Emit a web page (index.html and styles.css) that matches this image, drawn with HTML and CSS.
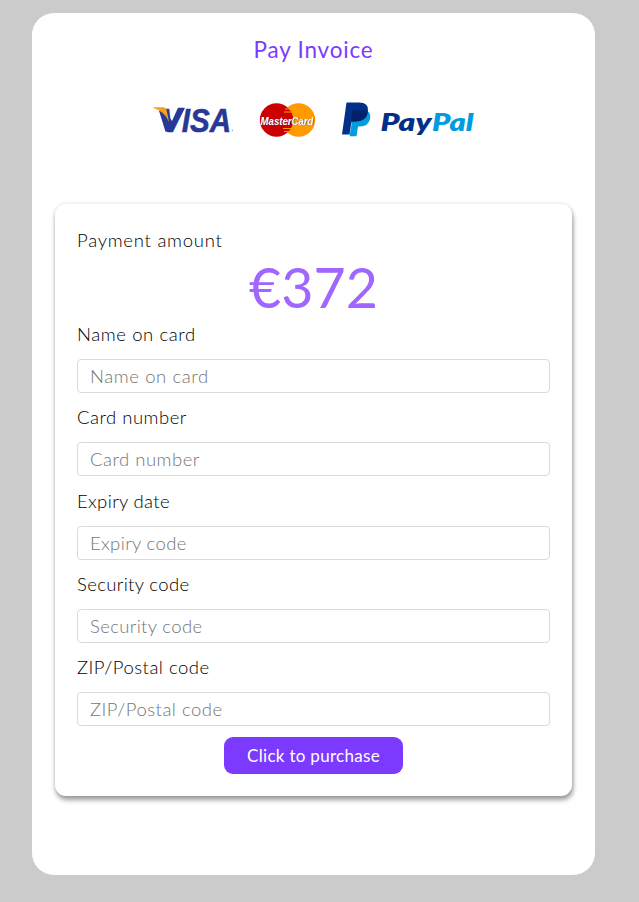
FILE: index.html
```html
<!DOCTYPE html>
<html lang="en">
<head>
<meta charset="utf-8">
<title>Pay Invoice</title>
<link rel="stylesheet" href="styles.css">
</head>
<body>
<main class="panel">
  <h1 class="title">Pay Invoice</h1>
  <div class="brands">
    <svg class="brand" width="82" height="40" viewBox="153 100 82 40" role="img" aria-label="Visa">
      <text class="visa" x="163" y="131.700" textLength="69" lengthAdjust="spacingAndGlyphs">VISA</text>
      <path fill="#fff" d="M153 104h20v3h-6l-2 8-5 3z"/>
      <path fill="#283897" d="M165 110l8 11 6-13.300h7L173 131.700h-6.500l-6.500-21z"/>
      <path fill="#f9a01b" d="M154.500 107.300H164q3 0 3.700 3.200l2.300 11.500q-4-10.500-15.500-14z"/>
      <circle cx="233.300" cy="130.500" r=".7" fill="#8b94c6"/>
    </svg>
    <svg class="brand" width="57" height="40" viewBox="259 100 57 40" role="img" aria-label="MasterCard">
      <circle cx="298.500" cy="120" r="16.700" fill="#ff9a00"/>
      <circle cx="276.500" cy="120" r="16.700" fill="#c00"/>
      <path stroke="#ff9a00" stroke-width="1.200" d="M285 109h5M284 112h8M283 128.500h9.500M284 131.500h7"/>
      <text class="mastercard mastercard-shadow" x="261" y="125.200" textLength="53" lengthAdjust="spacingAndGlyphs">MasterCard</text>
      <text class="mastercard" x="260.500" y="124.500" textLength="53" lengthAdjust="spacingAndGlyphs">MasterCard</text>
    </svg>
    <svg class="brand" width="134" height="40" viewBox="340 100 134 40" role="img" aria-label="PayPal">
      <path fill="#009cde" d="M363.500 109.500q7 2 5.500 9.500-1.800 7.500-10 7.500h-2l-1.500 9.800h-7l3-18z"/>
      <path fill="#003087" d="M345.500 102.500H358q10 0 9 8.500-1.500 10.500-12.500 10.500h-4l-2 13h-7.500z"/>
      <path fill="#012169" d="M351.500 110.500h12.500q2 .8 2.800 2.200-2 8.800-12.300 8.800h-4l-1 5z"/>
      <text class="paypal" y="131"><tspan class="paypal-dark" x="379.500" textLength="51" lengthAdjust="spacingAndGlyphs">Pay</tspan><tspan class="paypal-light" x="431" textLength="41.500" lengthAdjust="spacingAndGlyphs">Pal</tspan></text>
    </svg>
  </div>
  <form class="card">
    <div class="label amount-label">Payment amount</div>
    <div class="amount">€372</div>
    <div class="field">
      <label class="label name" for="name">Name on card</label>
      <input class="input name" id="name" type="text" placeholder="Name on card">
    </div>
    <div class="field">
      <label class="label number" for="number">Card number</label>
      <input class="input number" id="number" type="text" placeholder="Card number">
    </div>
    <div class="field">
      <label class="label expiry" for="expiry">Expiry date</label>
      <input class="input expiry" id="expiry" type="text" placeholder="Expiry code">
    </div>
    <div class="field">
      <label class="label security" for="security">Security code</label>
      <input class="input security" id="security" type="text" placeholder="Security code">
    </div>
    <div class="field">
      <label class="label postal" for="postal">ZIP/Postal code</label>
      <input class="input postal" id="postal" type="text" placeholder="ZIP/Postal code">
    </div>
    <button class="purchase" type="button">Click to purchase</button>
  </form>
</main>
</body>
</html>
```
FILE: styles.css
```css
* { box-sizing: border-box; }

body {
  margin: 0;
  height: 902px;
  padding: 13px 44px 27px 32px;
  background: #cbcbcb;
  font-family: Lato, "Open Sans", sans-serif;
  font-size: 18.5px;
  font-weight: 300;
}

.panel {
  height: 862px;
  padding: 22px 23px 0;
  border-radius: 22px;
  background: #fff;
}

.title {
  margin: 0;
  text-align: center;
  color: #7c3aff;
  font-size: 22.5px;
  font-weight: 400;
  line-height: 30px;
  letter-spacing: 0.8px;
}

.brands {
  display: flex;
  justify-content: center;
  gap: 25px;
  height: 40px;
  margin-top: 35px;
}

.brand { display: block; flex: none; overflow: visible; }

.visa {
  font: italic 700 33.5px "Liberation Sans", sans-serif;
  fill: #283897;
  stroke: #283897;
  stroke-width: 0.6px;
}

.mastercard {
  font: italic 700 11.5px "Liberation Sans", sans-serif;
  fill: #fff;
}

.mastercard-shadow { fill: #173a73; }

.paypal { font: italic 800 25px Lato, sans-serif; }
.paypal-dark { fill: #003087; }
.paypal-light { fill: #009cde; }

.card {
  height: 592px;
  margin-top: 64px;
  padding: 23px 22px;
  border-radius: 11px;
  background: #fff;
  box-shadow: 1px 4px 5px rgba(0, 0, 0, 0.38), 0 0 4px rgba(0, 0, 0, 0.12);
}

.label {
  display: block;
  height: 27px;
  line-height: 27px;
  color: #000;
}

.amount {
  height: 67px;
  line-height: 66px;
  text-align: center;
  color: #a066ff;
  font-size: 55.5px;
  font-weight: 400;
}

.field { height: 83.25px; }

.input {
  display: block;
  width: 473px;
  height: 34px;
  margin: 11px 0 0;
  padding: 0 12px;
  border: 1px solid #dadada;
  border-radius: 4px;
  background: #fff;
  font-family: inherit;
  font-size: 18.5px;
  font-weight: 300;
}

.input::placeholder { color: #757575; opacity: 1; }

.amount-label { letter-spacing: 0.75px; }
.name { letter-spacing: 0.6px; }
.number { letter-spacing: 0.5px; }
.expiry { letter-spacing: 0.35px; }
.security { letter-spacing: 0.35px; }
.postal { letter-spacing: 0.5px; }

.purchase {
  display: block;
  width: 179px;
  height: 37px;
  margin: 0 auto;
  padding: 0;
  border: 0;
  border-radius: 9px;
  background: #7c3aff;
  color: #fff;
  font-family: inherit;
  font-size: 17px;
  letter-spacing: 0.3px;
}
```
